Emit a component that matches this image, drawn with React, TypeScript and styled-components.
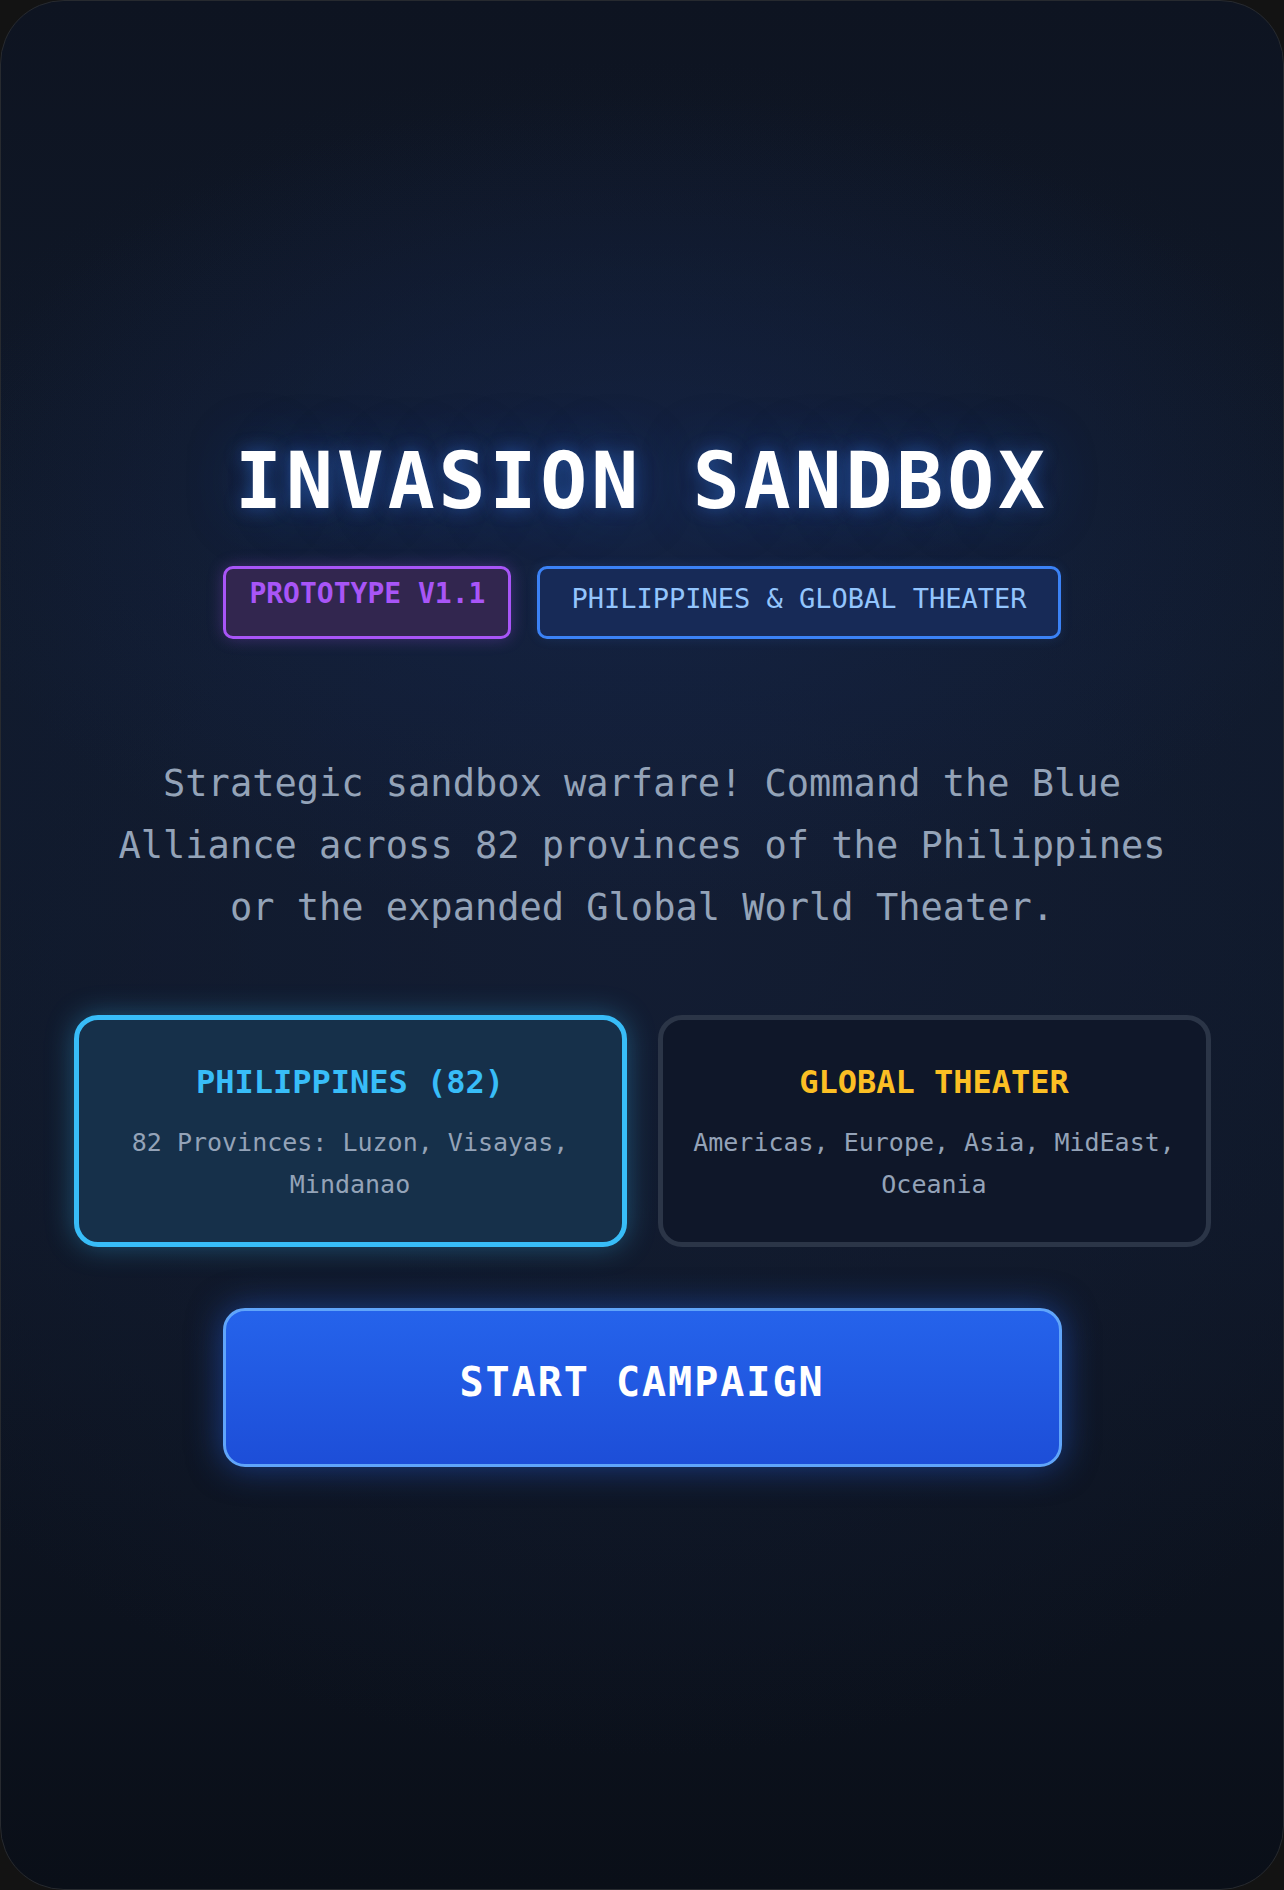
import React, { useState } from 'react';
import styled, { createGlobalStyle } from 'styled-components';

const GlobalStyle = createGlobalStyle`
  html, body {
    margin: 0;
    background: #131313;
  }
  * {
    box-sizing: border-box;
  }
`;

const mono = `"DejaVu Sans Mono", "Liberation Mono", monospace`;

const Screen = styled.main`
  min-height: 100vh;
  display: flex;
  flex-direction: column;
  align-items: center;
  padding-top: 434px;
  border: 1px solid #272a2f;
  border-radius: 64px;
  overflow: hidden;
  font-family: ${mono};
  background:
    radial-gradient(ellipse 55% 22% at 50% 27%, rgba(22, 42, 86, 0.5) 0%, rgba(22, 42, 86, 0) 100%),
    radial-gradient(ellipse 75% 45% at 50% 48%, #131d33 0%, rgba(19, 29, 51, 0) 100%),
    linear-gradient(180deg, #0e1421 0%, #101a2c 35%, #0f1727 65%, #0a0f18 100%);
`;

const Title = styled.h1`
  margin: 0;
  font-size: 78px;
  line-height: 1.2;
  font-weight: 700;
  letter-spacing: 0.05em;
  color: #ffffff;
  text-shadow: 0 0 18px rgba(59, 130, 246, 0.45), 0 0 60px rgba(37, 99, 235, 0.35);
`;

const BadgeRow = styled.div`
  display: flex;
  gap: 26px;
  margin-top: 37px;
`;

const Badge = styled.span<{ $tone: 'purple' | 'blue' }>`
  display: block;
  border: 3px solid ${(p) => (p.$tone === 'purple' ? '#a855f7' : '#3b82f6')};
  border-radius: 10px;
  background: ${(p) => (p.$tone === 'purple' ? '#32264f' : '#172a57')};
  color: ${(p) => (p.$tone === 'purple' ? '#a855f7' : '#93c5fd')};
  font-size: ${(p) => (p.$tone === 'purple' ? '28px' : '27px')};
  font-weight: ${(p) => (p.$tone === 'purple' ? 700 : 400)};
  line-height: 1.5;
  padding: ${(p) => (p.$tone === 'purple' ? '4px 23px' : '10px 31px 17px')};
  box-shadow: ${(p) =>
    p.$tone === 'purple' ? '0 0 16px rgba(168, 85, 247, 0.3)' : '0 0 12px rgba(59, 130, 246, 0.15)'};
`;

const Intro = styled.p`
  margin: 114px 0 0;
  max-width: 1080px;
  text-align: center;
  font-size: 37px;
  line-height: 62px;
  color: #94a3b8;
`;

const ModeGrid = styled.div`
  display: grid;
  grid-template-columns: 553px 553px;
  gap: 31px;
  margin-top: 76px;
`;

const ModeCard = styled.button<{ $active: boolean }>`
  display: flex;
  flex-direction: column;
  align-items: center;
  padding: 42px 24px 36px;
  border: 5px solid ${(p) => (p.$active ? '#38bdf8' : '#2b3547')};
  border-radius: 24px;
  background: ${(p) => (p.$active ? '#16304a' : '#0f1729')};
  box-shadow: ${(p) => (p.$active ? '0 0 28px rgba(56, 189, 248, 0.35)' : 'none')};
  font-family: ${mono};
  cursor: pointer;
`;

const ModeTitle = styled.span<{ $color: string }>`
  font-size: 32px;
  font-weight: 700;
  line-height: 1.3;
  color: ${(p) => p.$color};
`;

const ModeText = styled.span`
  margin-top: 18px;
  font-size: 25px;
  line-height: 42px;
  text-align: center;
  color: #94a3b8;
`;

const StartButton = styled.button`
  width: 839px;
  margin-top: 61px;
  padding: 47px 0 58px;
  border: 3px solid #60a5fa;
  border-radius: 22px;
  background: linear-gradient(180deg, #2563eb 0%, #1d4ed8 100%);
  box-shadow: 0 0 34px rgba(37, 99, 235, 0.5);
  color: #ffffff;
  font-family: ${mono};
  font-size: 40px;
  font-weight: 700;
  line-height: 1.2;
  letter-spacing: 0.05em;
  cursor: pointer;
`;

const modes = [
  {
    id: 'ph',
    title: 'PHILIPPINES (82)',
    color: '#38bdf8',
    text: '82 Provinces: Luzon, Visayas, Mindanao',
  },
  {
    id: 'global',
    title: 'GLOBAL THEATER',
    color: '#fbbf24',
    text: 'Americas, Europe, Asia, MidEast, Oceania',
  },
];

export default function App() {
  const [mode, setMode] = useState('ph');
  return (
    <>
      <GlobalStyle />
      <Screen>
        <Title>INVASION SANDBOX</Title>
        <BadgeRow>
          <Badge $tone="purple">PROTOTYPE V1.1</Badge>
          <Badge $tone="blue">PHILIPPINES &amp; GLOBAL THEATER</Badge>
        </BadgeRow>
        <Intro>
          Strategic sandbox warfare! Command the Blue Alliance across 82 provinces of the Philippines or the
          expanded Global World Theater.
        </Intro>
        <ModeGrid>
          {modes.map((m) => (
            <ModeCard key={m.id} $active={mode === m.id} onClick={() => setMode(m.id)}>
              <ModeTitle $color={m.color}>{m.title}</ModeTitle>
              <ModeText>{m.text}</ModeText>
            </ModeCard>
          ))}
        </ModeGrid>
        <StartButton>START CAMPAIGN</StartButton>
      </Screen>
    </>
  );
}
